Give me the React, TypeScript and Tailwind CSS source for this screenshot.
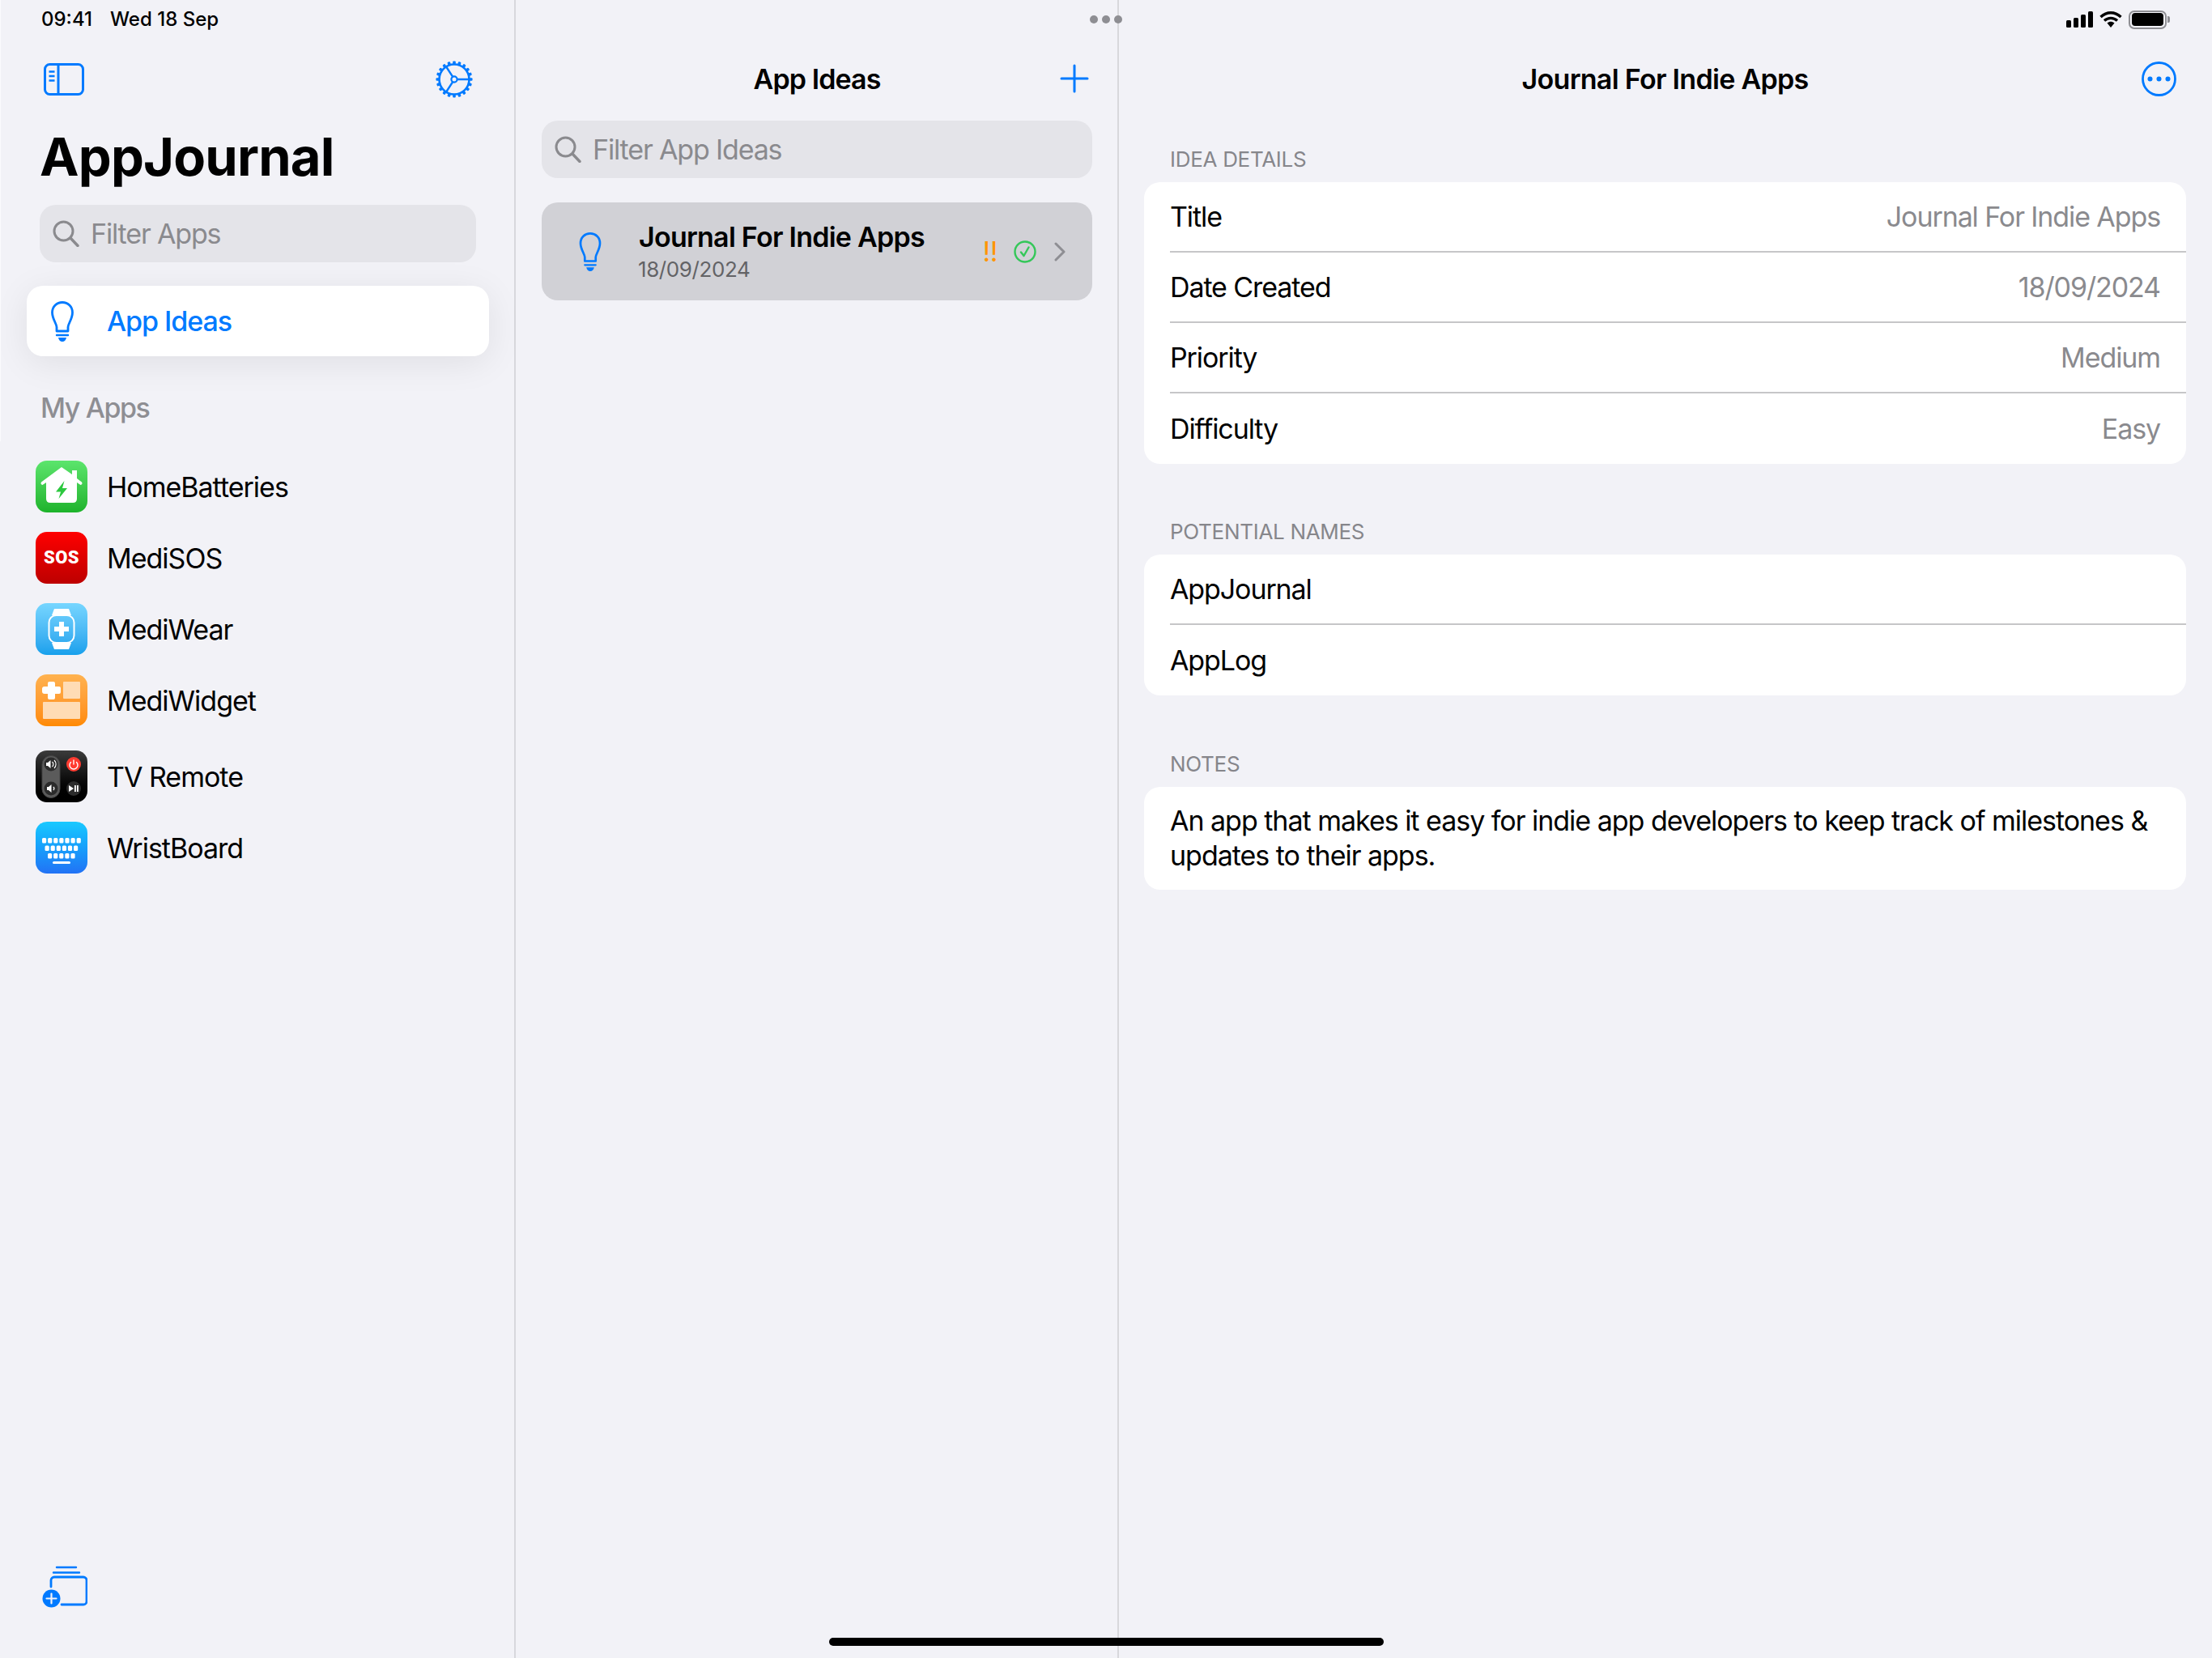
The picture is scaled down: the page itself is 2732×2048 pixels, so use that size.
import type { ReactNode } from "react";

const BLUE = "#007aff";

function SidebarToggleIcon() {
  return (
    <svg className="h-[40px] w-[50px]" fill="none" stroke={BLUE} viewBox="0 0 50 40">
      <rect height="37" rx="6" strokeWidth="3" width="47" x="1.5" y="1.5" />
      <path d="M18 2v36" strokeWidth="3" />
      <path d="M6.5 10.5h7M6.5 16h7M6.5 21.5h7" strokeWidth="2.5" />
    </svg>
  );
}

function GearIcon() {
  return (
    <svg className="size-[48px]" fill="none" stroke={BLUE} viewBox="0 0 48 48">
      <circle cx="24" cy="24" r="18.5" strokeWidth="2.6" />
      <circle cx="24" cy="24" r="3.6" strokeWidth="2.2" />
      {Array.from({ length: 20 }, (_, i) => (
        <rect fill={BLUE} height="4" key={i} rx="1" stroke="none" transform={`rotate(${i * 18} 24 24)`} width="3.6" x="22.2" y="1.5" />
      ))}
      <path d="M27.6 24H42M22.2 20.9 13.5 7.5M22.2 27.1 13.5 40.5" strokeWidth="2.4" />
    </svg>
  );
}

function BulbIcon({ className }: { className: string }) {
  return (
    <svg className={className} fill="none" stroke={BLUE} viewBox="0 0 28 50">
      <path d="M7 37V32C7 28 1.500 22 1.500 14 1.500 6.500 7 1.500 14 1.500S26.500 6.500 26.500 14C26.500 22 21 28 21 32V37Z" strokeLinejoin="round" strokeWidth="2.8" />
      <path d="M7 42h14" strokeLinecap="round" strokeWidth="2.4" />
      <path d="M9 45h10C18.500 48 16.500 50 14 50S9.500 48 9 45Z" fill={BLUE} stroke="none" />
    </svg>
  );
}

function SearchIcon() {
  return (
    <svg className="size-[33px] shrink-0" fill="none" stroke="#8a8a8e" viewBox="0 0 33 33">
      <circle cx="13.5" cy="13.5" r="11.5" strokeWidth="3" />
      <path d="M22 22l9 9.5" strokeLinecap="round" strokeWidth="3.4" />
    </svg>
  );
}

function HomeBatteriesIcon() {
  return (
    <svg viewBox="0 0 64 64">
      <path d="M32 8 45 17V12H51V22L57 26.500Q58.500 29 55.500 30L51 27V47Q51 52 46 52H18Q13 52 13 47V27L8.500 30Q5.500 29 7 26.500Z" fill="#fff" />
      <path d="M35.500 25 25 38.500H31L28.500 47 39 34H33Z" fill="#2cc83f" />
    </svg>
  );
}

function MediWearIcon() {
  return (
    <svg viewBox="0 0 64 64">
      <path d="M23 7H41L44 15H20ZM20 49H44L41 57H23Z" fill="#fff" />
      <rect fill="none" height="34" rx="9" stroke="#fff" strokeWidth="2" width="31" x="16.500" y="15" />
      <path d="M29 23h6v6h6v6h-6v6h-6v-6h-6v-6h6Z" fill="#fff" />
    </svg>
  );
}

function MediWidgetIcon() {
  return (
    <svg viewBox="0 0 64 64">
      <rect fill="#ffdcb5" height="21" rx="1" width="21" x="34" y="9" />
      <rect fill="#ffdcb5" height="21" rx="1" width="46" x="9" y="34" />
      <path d="M15 11a2 2 0 0 1 2-2h5a2 2 0 0 1 2 2v4h5a2 2 0 0 1 2 2v5a2 2 0 0 1-2 2h-5v5a2 2 0 0 1-2 2h-5a2 2 0 0 1-2-2v-5h-4a3 3 0 0 1-3-3v-3a3 3 0 0 1 3-3h4Z" fill="#fff" />
    </svg>
  );
}

function TvRemoteIcon() {
  return (
    <svg viewBox="0 0 64 64">
      <rect fill="#5b5b5b" height="52" rx="11" stroke="#444" width="22" x="8" y="6.500" />
      <circle cx="19" cy="17" fill="#2b2b2b" r="8.500" />
      <circle cx="19" cy="47" fill="#2b2b2b" r="8.500" />
      <circle cx="47" cy="17" fill="#ff3b30" r="9" />
      <circle cx="47" cy="47" fill="#2c2c2c" r="9" />
      <path d="M13 15h2l3.500-3v10L15 19h-2ZM14 45h2l3.500-3v10L16 49h-2Z" fill="#fff" />
      <path d="M20.500 14a4 4 0 0 1 0 6M23 12a7 7 0 0 1 0 10M22 45a3 3 0 0 1 0 4" fill="none" stroke="#fff" strokeWidth="1.200" />
      <path d="M43.500 14.500a5 5 0 1 0 7 0M47 12v5" fill="none" stroke="#fff" strokeLinecap="round" strokeWidth="1.400" />
      <path d="M41 43v8l6-4ZM48 43h1.800v8H48ZM51 43h1.800v8H51Z" fill="#fff" />
    </svg>
  );
}

function KeyRow({ count, x, y }: { count: number; x: number; y: number }) {
  return (
    <>
      {Array.from({ length: count }, (_, i) => (
        <rect fill="#fff" height="6.500" key={i} rx="1.500" width="5.200" x={x + i * 7.1} y={y} />
      ))}
    </>
  );
}

function WristBoardIcon() {
  return (
    <svg viewBox="0 0 64 64">
      <KeyRow count={7} x={8} y={20} />
      <KeyRow count={6} x={11.500} y={29.500} />
      <KeyRow count={5} x={15} y={39} />
      <rect fill="#fff" height="3" rx="1.500" width="22" x="21" y="49" />
    </svg>
  );
}

function AppTile({ gradient, children }: { gradient: string; children: ReactNode }) {
  return (
    <div className={`flex size-[64px] shrink-0 items-center justify-center overflow-hidden rounded-[14px] ${gradient}`}>
      {children}
    </div>
  );
}

const apps = [
  { name: "HomeBatteries", gradient: "bg-gradient-to-b from-[#5be56c] to-[#1cb32a]", icon: <HomeBatteriesIcon />, extra: "" },
  {
    name: "MediSOS",
    gradient: "bg-gradient-to-b from-[#ff0000] to-[#bd0000]",
    icon: <span className="font-['Roboto',sans-serif] font-black text-[22px] text-white leading-none tracking-[0.5px]">SOS</span>,
    extra: "",
  },
  { name: "MediWear", gradient: "bg-gradient-to-b from-[#76d6ff] to-[#15a0ec]", icon: <MediWearIcon />, extra: "" },
  { name: "MediWidget", gradient: "bg-gradient-to-b from-[#ffb24f] to-[#ff8a00]", icon: <MediWidgetIcon />, extra: "" },
  { name: "TV Remote", gradient: "bg-gradient-to-b from-[#3c3c3c] to-[#000000]", icon: <TvRemoteIcon />, extra: "mt-[6px]" },
  { name: "WristBoard", gradient: "bg-gradient-to-b from-[#1ac9ff] to-[#2272f5]", icon: <WristBoardIcon />, extra: "" },
];

function SearchField({ placeholder, className }: { placeholder: string; className: string }) {
  return (
    <div className={`flex items-center rounded-[20px] bg-[#e4e4e9] text-[#8a8a8e] text-[34px] tracking-[-1.15px] ${className}`}>
      <SearchIcon />
      <span>{placeholder}</span>
    </div>
  );
}

function Sidebar() {
  return (
    <aside className="flex h-full w-[637px] shrink-0 flex-col border-[#d8d8dc] border-r-2">
      <div className="mt-[74px] flex items-center justify-between pr-[50px] pl-[54px]">
        <SidebarToggleIcon />
        <GearIcon />
      </div>
      <h1 className="mt-[34px] pl-[49px] font-bold text-[65px] text-black leading-[76px] tracking-[-0.8px]">AppJournal</h1>
      <SearchField className="mt-[21px] ml-[49px] h-[71px] w-[539px] gap-[14px] pl-[16px]" placeholder="Filter Apps" />
      <div className="mt-[29px] ml-[33px] flex h-[87px] w-[571px] items-center rounded-[20px] bg-white pl-[30px] text-[#007aff] shadow-[0_8px_44px_rgba(0,0,0,0.08)]">
        <BulbIcon className="h-[50px] w-[28px]" />
        <span className="ml-[41px] font-medium text-[34px] tracking-[-1.05px]">App Ideas</span>
      </div>
      <div className="mt-[43px] pl-[50px] font-medium text-[#8e8e93] text-[34px] leading-[41px] tracking-[-1.4px]">My Apps</div>
      <div className="mt-[45px] flex flex-col gap-[24px] pl-[44px]">
        {apps.map((app) => (
          <div className={`flex items-center gap-[24px] ${app.extra}`} key={app.name}>
            <AppTile gradient={app.gradient}>{app.icon}</AppTile>
            <span className="text-[34px] text-black tracking-[-1px]">{app.name}</span>
          </div>
        ))}
      </div>
      <div className="mt-auto mb-[62px] ml-[52px]">
        <svg className="h-[52px] w-[56px]" fill="none" stroke={BLUE} viewBox="0 0 56 52">
          <path d="M18 2h24M14 8.500h32" strokeLinecap="round" strokeWidth="2.4" />
          <path d="M11 26V18a4 4 0 0 1 4-4h36a4 4 0 0 1 4 4v26a4 4 0 0 1-4 4H24" strokeLinecap="round" strokeWidth="2.8" />
          <circle cx="11.500" cy="40.500" fill={BLUE} r="11" stroke="none" />
          <path d="M11.500 34.500v12M5.500 40.500h12" stroke="#f2f2f7" strokeLinecap="round" strokeWidth="2.2" />
        </svg>
      </div>
    </aside>
  );
}

function IdeasColumn() {
  return (
    <section className="flex h-full w-[745px] shrink-0 flex-col border-[#d8d8dc] border-r-2 pr-[31px] pl-[32px]">
      <div className="relative mt-[74px] flex h-[46px] items-center justify-center">
        <h2 className="font-semibold text-[34px] text-black tracking-[-0.9px]">App Ideas</h2>
        <svg className="absolute top-[5px] right-[4px] size-[36px]" fill="none" stroke={BLUE} strokeLinecap="round" strokeWidth="3" viewBox="0 0 36 36">
          <path d="M18 2v32M2 18h32" />
        </svg>
      </div>
      <SearchField className="mt-[29px] h-[71px] gap-[14px] pl-[16px]" placeholder="Filter App Ideas" />
      <div className="mt-[30px] flex h-[121px] items-center rounded-[20px] bg-[#d1d1d6] pr-[33px] pl-[46px]">
        <BulbIcon className="h-[48px] w-[28px]" />
        <div className="ml-[46px] flex flex-col">
          <span className="font-semibold text-[34px] text-black leading-[42px] tracking-[-0.75px]">Journal For Indie Apps</span>
          <span className="mt-[3px] -ml-px text-[#636366] text-[26px] leading-[32px] tracking-[-0.4px]">18/09/2024</span>
        </div>
        <div className="ml-auto flex items-center">
          <span className="font-normal text-[#ff9500] text-[34px] leading-none tracking-[-0.5px]">!!</span>
          <svg className="ml-[20px] size-[28px]" fill="none" stroke="#34c759" strokeWidth="2.400" viewBox="0 0 28 28">
            <circle cx="14" cy="14" r="12.500" />
            <path d="M9 14.500l3.500 4.500L18.500 8.500" strokeLinecap="round" strokeLinejoin="round" />
          </svg>
          <svg className="ml-[22px] h-[24px] w-[14px]" fill="none" stroke="#8e8e93" strokeLinecap="round" strokeLinejoin="round" strokeWidth="3" viewBox="0 0 14 24">
            <path d="M2 2l10 10L2 22" />
          </svg>
        </div>
      </div>
    </section>
  );
}

function FormSection({ title, className, children }: { title: string; className?: string; children: ReactNode }) {
  return (
    <div className={className}>
      <div className="mb-[12px] pl-[32px] text-[#86868b] text-[26px] leading-[32px] tracking-[-0.3px]">{title}</div>
      <div className="overflow-hidden rounded-[20px] bg-white">{children}</div>
    </div>
  );
}

function FormRow({ label, value, last }: { label: string; value?: string; last?: boolean }) {
  return (
    <div className="pl-[32px]">
      <div className={`flex h-[87px] items-center justify-between pr-[32px] text-[34px] tracking-[-1.1px] ${last ? "" : "border-[#c6c6c8] border-b-2"}`}>
        <span className="text-black">{label}</span>
        {value ? <span className="text-[#8a8a8e]">{value}</span> : null}
      </div>
    </div>
  );
}

function DetailColumn() {
  return (
    <section className="flex h-full min-w-0 flex-1 flex-col pr-[32px] pl-[31px]">
      <div className="relative mt-[74px] flex h-[46px] items-center justify-center">
        <h2 className="font-semibold text-[34px] text-black tracking-[-0.7px]">Journal For Indie Apps</h2>
        <svg className="absolute top-[2px] right-[12px] size-[43px]" fill={BLUE} viewBox="0 0 43 43">
          <circle cx="21.500" cy="21.500" fill="none" r="20" stroke={BLUE} strokeWidth="2.800" />
          <circle cx="10.500" cy="21.500" r="3" />
          <circle cx="21.500" cy="21.500" r="3" />
          <circle cx="32.500" cy="21.500" r="3" />
        </svg>
      </div>
      <FormSection className="mt-[61px]" title="IDEA DETAILS">
        <FormRow label="Title" value="Journal For Indie Apps" />
        <FormRow label="Date Created" value="18/09/2024" />
        <FormRow label="Priority" value="Medium" />
        <FormRow label="Difficulty" last value="Easy" />
      </FormSection>
      <FormSection className="mt-[68px]" title="POTENTIAL NAMES">
        <FormRow label="AppJournal" />
        <FormRow label="AppLog" last />
      </FormSection>
      <FormSection className="mt-[69px]" title="NOTES">
        <div className="pt-[20px] pr-[33px] pb-[21px] pl-[32px] text-[34px] text-black leading-[43px] tracking-[-1.02px]">
          An app that makes it easy for indie app developers to keep track of milestones &amp; updates to their apps.
        </div>
      </FormSection>
    </section>
  );
}

function StatusBar() {
  return (
    <div className="absolute inset-x-0 top-[9px] flex h-[30px] items-center pr-[52px] pl-[51px] font-medium text-[24px] text-black">
      <span>09:41</span>
      <span className="ml-[22px]">Wed 18 Sep</span>
      <div className="ml-auto flex items-center gap-[8px]">
        <div className="flex items-end gap-[3px]">
          <div className="h-[9px] w-[6px] rounded-[1.5px] bg-black" />
          <div className="h-[12px] w-[6px] rounded-[1.5px] bg-black" />
          <div className="h-[16px] w-[6px] rounded-[1.5px] bg-black" />
          <div className="h-[20px] w-[6px] rounded-[1.5px] bg-black" />
        </div>
        <svg className="h-[20px] w-[28px]" fill="none" stroke="#000" strokeWidth="3.400" viewBox="0 0 28 20">
          <path d="M1.500 7C9 0 19 0 26.500 7M6 11.500c4.800-4.200 11.200-4.200 16 0" />
          <path d="M9.500 14.500c2.800-2.200 6.200-2.200 9 0L14 20Z" fill="#000" stroke="none" />
        </svg>
        <div className="flex items-center">
          <div className="flex h-[23px] w-[47px] items-center justify-center rounded-[7px] border-2 border-[#8e8e93]">
            <div className="h-[16px] w-[39px] rounded-[4px] bg-black" />
          </div>
          <div className="ml-[1px] h-[8px] w-[3px] rounded-r-[2px] bg-[#8e8e93]" />
        </div>
      </div>
    </div>
  );
}

export default function App() {
  return (
    <div className="relative flex h-[2048px] w-[2732px] overflow-hidden bg-[#f2f2f7] font-['Inter',sans-serif]">
      <Sidebar />
      <IdeasColumn />
      <DetailColumn />
      <StatusBar />
      <div className="absolute top-0 left-0 h-[545px] w-px bg-[#fbfbfd]" />
      <div className="absolute top-[19px] left-[1346px] flex gap-[5px]">
        <div className="size-[10px] rounded-full bg-[#8e8e93]" />
        <div className="size-[10px] rounded-full bg-[#8e8e93]" />
        <div className="size-[10px] rounded-full bg-[#8e8e93]" />
      </div>
      <div className="absolute bottom-[15px] left-[1024px] h-[10px] w-[685px] rounded-full bg-black" />
    </div>
  );
}
